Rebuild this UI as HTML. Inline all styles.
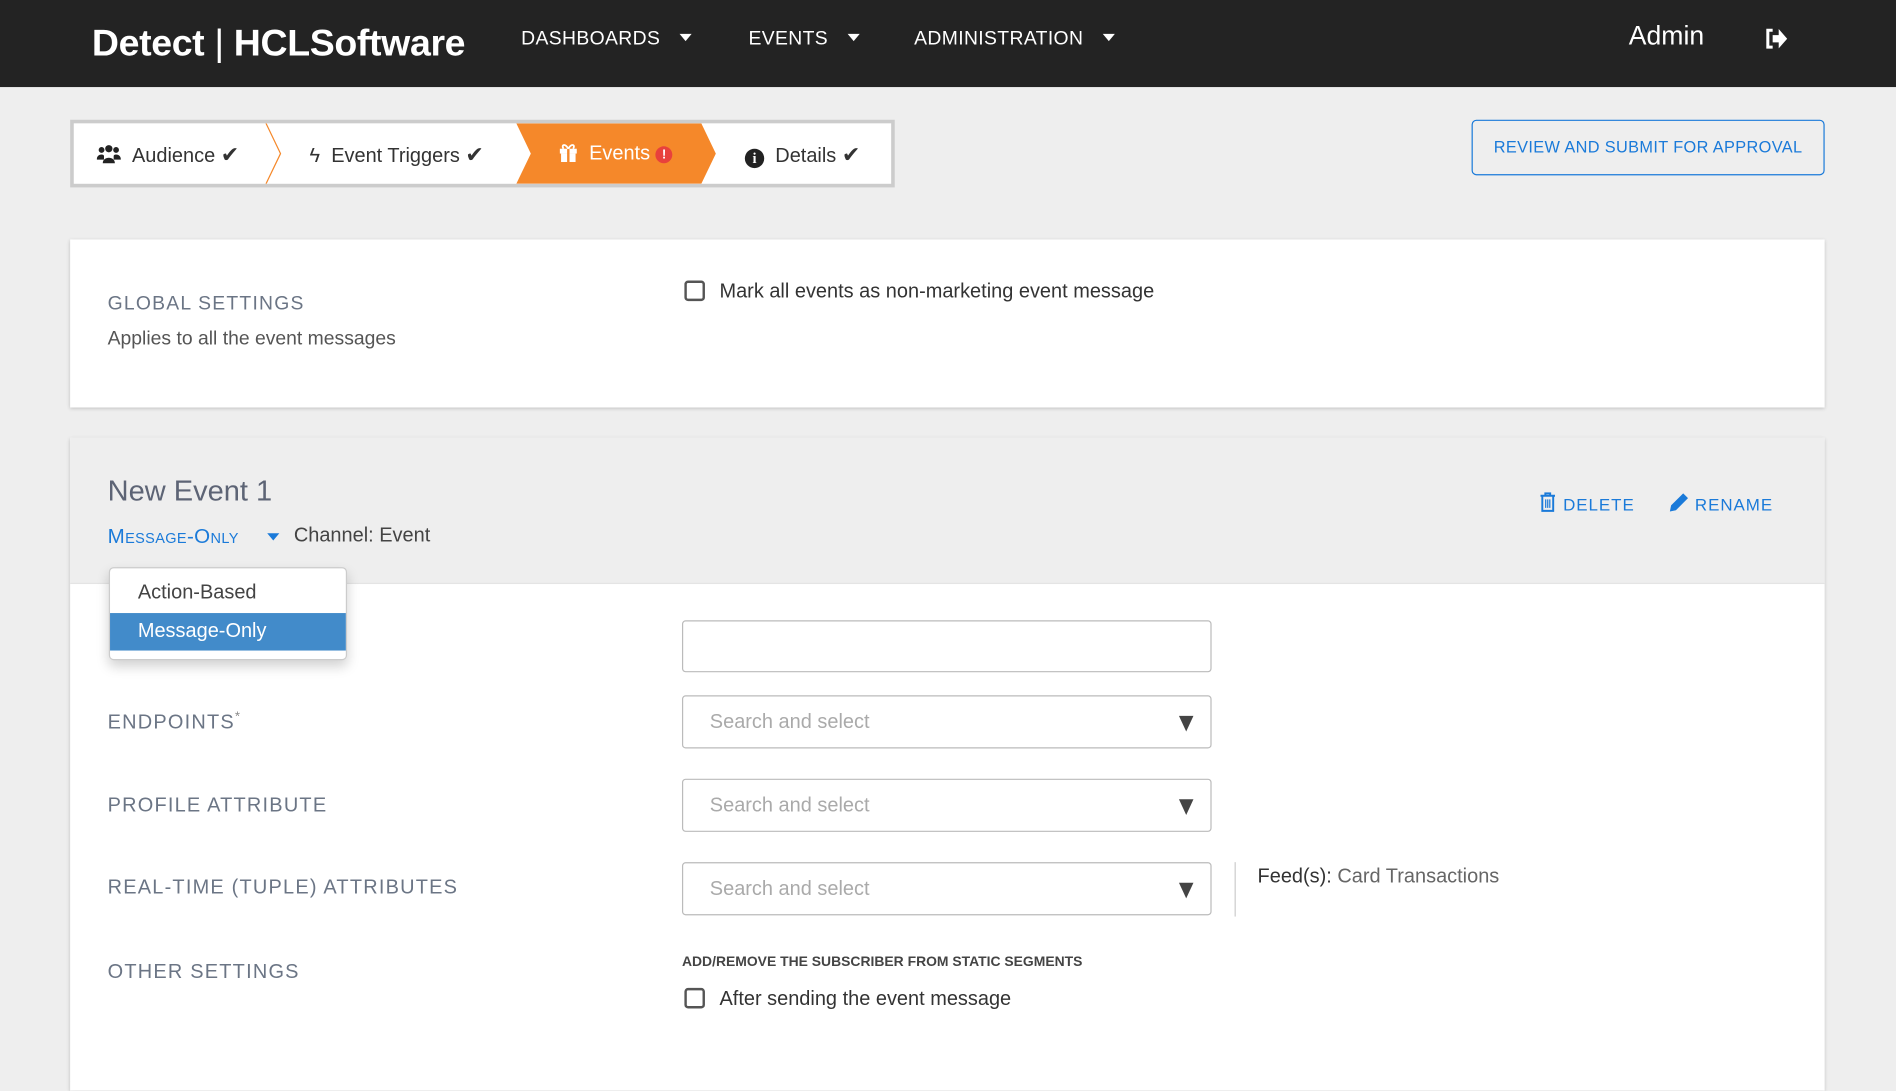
<!DOCTYPE html>
<html><head><meta charset="utf-8"><style>
*{box-sizing:border-box;margin:0;padding:0}
html,body{width:1896px;height:1081px;overflow:hidden;background:#eee}
#w{position:absolute;left:0;top:0;width:1568px;height:894px;transform:scale(1.20918);transform-origin:0 0;font-family:"Liberation Sans",sans-serif;background:#eee}
.a{position:absolute;white-space:nowrap}
.hdr{position:absolute;left:0;top:0;width:1568px;height:72px;background:#232323}
.nav{color:#fff;font-size:16px;letter-spacing:.3px;top:24px}
.tri{display:inline-block;width:0;height:0;border-left:5px solid transparent;border-right:5px solid transparent;border-top:6px solid #fff;margin-left:16px;vertical-align:middle;position:relative;top:-2px}
.card{position:absolute;left:58px;width:1451px;background:#fff;box-shadow:0 1px 3px rgba(0,0,0,.2)}
.lbl{color:#6b7585;font-size:16.5px;letter-spacing:1px}
.inp{position:absolute;left:564px;width:438px;border:1px solid #bbb;border-radius:3px;background:#fff}
.ph{position:absolute;left:22px;color:#aaa;font-size:16.5px}
.ar{position:absolute;right:14px;width:0;height:0;border-left:6px solid transparent;border-right:6px solid transparent;border-top:13px solid #444}
.cb{position:absolute;width:17px;height:17px;border:2px solid #555;border-radius:3px;background:#fff}
</style></head><body><div id="w">
<div class="hdr"></div>
<div class="a" style="left:76px;top:18px;color:#fff;font-size:31px;font-weight:bold;letter-spacing:-.3px">Detect <span style="font-weight:normal">|</span> HCLSoftware</div>
<div class="a nav" style="left:431px">DASHBOARDS<span class="tri"></span></div>
<div class="a nav" style="left:619px">EVENTS<span class="tri"></span></div>
<div class="a nav" style="left:756px">ADMINISTRATION<span class="tri"></span></div>
<div class="a" style="left:1347px;top:17px;color:#fff;font-size:22px">Admin</div>
<svg class="a" style="left:1459px;top:23px" width="20" height="18" viewBox="0 0 20 18"><path d="M7 2H3v14h4" fill="none" stroke="#fff" stroke-width="2.5"/><path d="M7 6h5V1l7 8-7 8v-5H7z" fill="#fff"/></svg>

<div class="a" style="left:58px;top:99px;width:682px;height:56px;border:3px solid #ccc;background:#fff"></div>
<svg class="a" style="left:61px;top:102px" width="676" height="50"><path d="M159 0L171 25L159 50" fill="none" stroke="#f5882a" stroke-width="1"/><path d="M366 0H519L531 25L519 50H366L378 25Z" fill="#f5882a"/></svg>
<div class="a" style="left:80px;top:118px;font-size:16.5px;color:#333"><svg width="20" height="17" viewBox="0 0 20 17" style="vertical-align:-2px"><circle cx="10" cy="4" r="3" fill="#222"/><circle cx="4" cy="5" r="2.4" fill="#222"/><circle cx="16" cy="5" r="2.4" fill="#222"/><path d="M5 16c0-6 10-6 10 0zM0 13c0-5 6-5 6-3v3zM20 13c0-5-6-5-6-3v3z" fill="#222"/></svg> &nbsp;Audience <span style="font-size:18px">✔</span></div>
<div class="a" style="left:256px;top:118px;font-size:16.5px;color:#333">ϟ &nbsp;Event Triggers <span style="font-size:18px">✔</span></div>
<div class="a" style="left:462px;top:118px;font-size:16.5px;color:#fff"><svg width="16" height="16" viewBox="0 0 16 16" style="vertical-align:-2px"><rect x="1" y="5" width="14" height="4" fill="#fff"/><rect x="2" y="9" width="12" height="7" fill="#fff"/><rect x="7" y="5" width="2" height="11" fill="#f5882a"/><path d="M8 5C5 0 2 2 4 5M8 5c3-5 6-3 4 0" fill="none" stroke="#fff" stroke-width="1.5"/></svg> &nbsp;Events <span style="display:inline-block;width:14px;height:14px;border-radius:50%;background:#e8413c;color:#fff;font-size:11px;text-align:center;line-height:14px;font-weight:bold;vertical-align:1px">!</span></div>
<div class="a" style="left:616px;top:118px;font-size:16.5px;color:#333"><span style="display:inline-block;width:16px;height:16px;border-radius:50%;background:#222;color:#fff;font-size:12px;text-align:center;line-height:16px;font-weight:bold;font-family:'Liberation Serif',serif;vertical-align:-1px">i</span> &nbsp;Details <span style="font-size:18px">✔</span></div>

<div class="a" style="left:1217px;top:99px;width:292px;height:46px;border:1px solid #1a7ad9;border-radius:4px;color:#1a7ad9;font-size:13.5px;letter-spacing:.3px;text-align:center;line-height:44px">REVIEW AND SUBMIT FOR APPROVAL</div>

<div class="card" style="top:198px;height:139px"></div>
<div class="a lbl" style="left:89px;top:243px;font-size:16px">GLOBAL SETTINGS</div>
<div class="a" style="left:89px;top:272px;font-size:16px;color:#555">Applies to all the event messages</div>
<div class="cb" style="left:566px;top:232px"></div>
<div class="a" style="left:595px;top:232px;font-size:16.5px;color:#333">Mark all events as non-marketing event message</div>

<div class="card" style="top:362px;height:540px"></div>
<div class="a" style="left:58px;top:362px;width:1451px;height:121px;background:#eee;border-bottom:1px solid #e4e4e4"></div>
<div class="a" style="left:89px;top:393px;font-size:24px;color:#5d6475">New Event 1</div>
<div class="a" style="left:89px;top:434px;font-size:17px;color:#1a7ad9;font-variant:small-caps;letter-spacing:.3px">Message-Only</div>
<div class="a" style="left:221px;top:441px;width:0;height:0;border-left:5px solid transparent;border-right:5px solid transparent;border-top:6px solid #1a7ad9"></div>
<div class="a" style="left:243px;top:434px;font-size:16.5px;color:#444">Channel: Event</div>
<div class="a" style="left:1272px;top:407px;font-size:14px;color:#1a7ad9;letter-spacing:.8px"><svg width="16" height="17" viewBox="0 0 16 17" style="vertical-align:-2px"><path d="M2 3h12M6 3V1h4v2M3.5 3.5v12h9v-12" fill="none" stroke="#1a7ad9" stroke-width="1.6"/><path d="M6.3 6v7M8 6v7M9.7 6v7" stroke="#1a7ad9" stroke-width="1"/></svg> DELETE</div>
<div class="a" style="left:1380px;top:407px;font-size:14px;color:#1a7ad9;letter-spacing:.8px"><svg width="17" height="17" viewBox="0 0 17 17" style="vertical-align:-2px"><path d="M1 16l1-5L12 1l4 4L6 15z" fill="#1a7ad9"/></svg> RENAME</div>

<div class="a" style="left:90px;top:469px;width:197px;height:77px;background:#fff;border:1px solid #ccc;border-radius:4px;box-shadow:0 5px 10px rgba(0,0,0,.18)"></div>
<div class="a" style="left:114px;top:481px;font-size:16.5px;color:#444">Action-Based</div>
<div class="a" style="left:91px;top:507px;width:195px;height:31px;background:#428bca"></div>
<div class="a" style="left:114px;top:513px;font-size:16.5px;color:#fff">Message-Only</div>

<div class="inp" style="top:513px;height:43px"></div>
<div class="a lbl" style="left:89px;top:587px">ENDPOINTS<sup style="font-size:11px;color:#888">*</sup></div>
<div class="inp" style="top:575px;height:44px"><div class="ph" style="top:12px">Search and select</div><div class="ar" style="top:16px"></div></div>
<div class="a lbl" style="left:89px;top:657px">PROFILE ATTRIBUTE</div>
<div class="inp" style="top:644px;height:44px"><div class="ph" style="top:12px">Search and select</div><div class="ar" style="top:16px"></div></div>
<div class="a lbl" style="left:89px;top:725px">REAL-TIME (TUPLE) ATTRIBUTES</div>
<div class="inp" style="top:713px;height:44px"><div class="ph" style="top:12px">Search and select</div><div class="ar" style="top:16px"></div></div>
<div class="a" style="left:1021px;top:713px;width:1px;height:45px;background:#ccc"></div>
<div class="a" style="left:1040px;top:716px;font-size:16.5px;color:#666"><span style="color:#333">Feed(s):</span> Card Transactions</div>
<div class="a lbl" style="left:89px;top:795px">OTHER SETTINGS</div>
<div class="a" style="left:564px;top:790px;font-size:11.5px;font-weight:bold;color:#444;letter-spacing:0">ADD/REMOVE THE SUBSCRIBER FROM STATIC SEGMENTS</div>
<div class="cb" style="left:566px;top:817px"></div>
<div class="a" style="left:595px;top:817px;font-size:16.5px;color:#333">After sending the event message</div>
</div></body></html>
